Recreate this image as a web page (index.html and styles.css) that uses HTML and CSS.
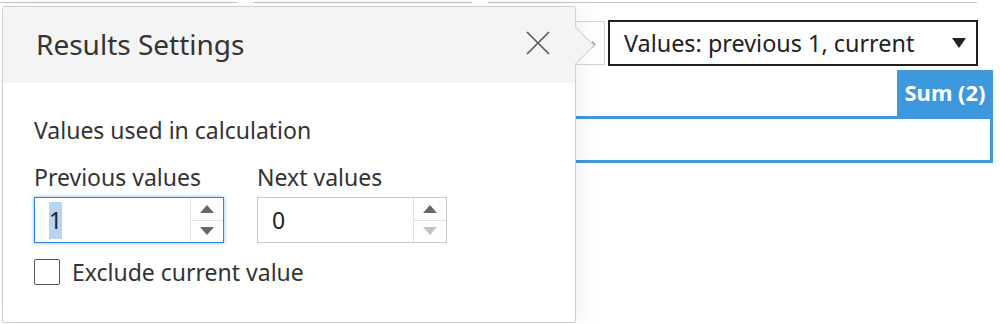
FILE: index.html
```html
<!DOCTYPE html>
<html>
<head>
    <meta charset="utf-8">
    <title>Results Settings</title>
    <link rel="stylesheet" href="styles.css">
</head>
<body>
<!-- page behind the popover -->
<div class="page">
    <div class="rules">
        <span class="rule r1"></span>
        <span class="rule r2"></span>
        <span class="rule r3"></span>
    </div>

    <div class="toolbar">
        <div class="ghost-btn">›</div>
        <div class="dropdown">
            <span>Values: previous 1, current</span>
            <span class="caret"></span>
        </div>
    </div>

    <div class="tab-row">
        <div class="sum-tab">Sum (2)</div>
    </div>
    <div class="sum-box"></div>

    <!-- tops of the next table row, cut by the window -->
    <div class="peek-row">
        <span class="peek p1"></span>
        <span class="peek p2"></span>
        <span class="peek p3"></span>
    </div>
</div>

<!-- popover -->
<div class="popover">
    <div class="pop-arrow"></div>
    <div class="pop-head">
        <span class="pop-title">Results Settings</span>
        <svg class="pop-close" width="26" height="26" viewBox="0 0 26 26">
            <path d="M2 2 L24 24 M24 2 L2 24" stroke="#555" stroke-width="1.6" fill="none"/>
        </svg>
    </div>
    <div class="pop-body">
        <div class="section-label">Values used in calculation</div>
        <div class="fields">
            <div class="field">
                <div class="field-label">Previous values</div>
                <div class="spin spin-focus">
                    <div class="spin-value"><span class="sel">1</span></div>
                    <div class="spin-btns">
                        <div class="spin-btn"><span class="tri-up"></span></div>
                        <div class="spin-btn"><span class="tri-down"></span></div>
                    </div>
                </div>
            </div>
            <div class="field">
                <div class="field-label">Next values</div>
                <div class="spin">
                    <div class="spin-value">0</div>
                    <div class="spin-btns">
                        <div class="spin-btn"><span class="tri-up"></span></div>
                        <div class="spin-btn"><span class="tri-down off"></span></div>
                    </div>
                </div>
            </div>
        </div>
        <label class="check-row">
            <span class="check"></span>
            <span>Exclude current value</span>
        </label>
    </div>
</div>
</body>
</html>
```

FILE: styles.css
```css
html, body {
    margin: 0;
    padding: 0;
}
body {
    width: 1000px;
    height: 324px;
    overflow: hidden;
    position: relative;
    background: #fff;
    font-family: "Noto Sans", "Open Sans", sans-serif;
    color: #333;
}

/* page behind */
.page {
    height: 324px;
}
.rules {
    display: flex;
    gap: 16px;
    padding-top: 2px;
}
.rule {
    display: block;
    height: 0;
    border-top: 1px solid #c4c4c4;
}
.r1 { width: 237px; }
.r2 { width: 219px; }
.r3 { width: 489px; }

.toolbar {
    display: flex;
    justify-content: flex-end;
    gap: 3px;
    padding-right: 22px;
    margin-top: 17px;
}
.ghost-btn {
    width: 160px;
    height: 44px;
    margin-top: 1px;
    border: 1px solid #d4d4d4;
    box-sizing: border-box;
    text-align: right;
    padding-right: 8px;
    line-height: 42px;
    color: #888;
    font-size: 16px;
}
.dropdown {
    width: 370px;
    height: 46px;
    box-sizing: border-box;
    border: 2px solid #1f1f1f;
    display: flex;
    align-items: center;
    justify-content: space-between;
    padding: 0 10px 0 14px;
    font-size: 23.4px;
    color: #222;
}
.caret {
    width: 0;
    height: 0;
    border-left: 7px solid transparent;
    border-right: 7px solid transparent;
    border-top: 10px solid #222;
}

.tab-row {
    display: flex;
    justify-content: flex-end;
    padding-right: 7px;
    margin-top: 4px;
}
.sum-tab {
    width: 96px;
    height: 46px;
    background: #3d98de;
    color: #fff;
    font-weight: 700;
    font-size: 22px;
    line-height: 44px;
    text-align: center;
}
.sum-box {
    margin-left: 400px;
    width: 593px;
    height: 47px;
    box-sizing: border-box;
    border: 3px solid #3d98de;
}

.peek-row {
    display: flex;
    margin-top: 158px;
    padding-left: 16px;
}
.peek {
    display: block;
    height: 2px;
    border-top: 2px dotted #aaa;
}
.p1 { width: 90px; }
.p2 { width: 50px; margin-left: 166px; }
.p3 { width: 50px; margin-left: 170px; }

/* popover */
.popover {
    position: absolute;
    left: 2px;
    top: 6px;
    width: 574px;
    height: 317px;
    box-sizing: border-box;
    background: #fff;
    border: 1px solid #cfcfcf;
    border-radius: 2px;
    box-shadow: 6px 2px 22px rgba(0, 0, 0, 0.06);
}
.pop-arrow {
    position: absolute;
    right: -14px;
    top: 25px;
    width: 26px;
    height: 26px;
    background: #f4f4f4;
    border-top: 1px solid #cfcfcf;
    border-right: 1px solid #cfcfcf;
    transform: rotate(45deg);
}
.pop-head {
    position: relative;
    height: 76px;
    background: #f4f4f4;
    display: flex;
    align-items: center;
    justify-content: space-between;
    padding: 0 24px 0 33px;
    border-radius: 2px 2px 0 0;
}
.pop-title {
    font-size: 28px;
    color: #333;
    margin-top: -3px;
}
.pop-close {
    display: block;
    margin-top: -4px;
}

.pop-body {
    padding: 33px 0 0 31px;
    font-size: 23px;
}
.section-label {
    line-height: 28px;
}
.fields {
    display: flex;
    gap: 33px;
    margin-top: 19px;
}
.field-label {
    line-height: 28px;
}
.spin {
    display: flex;
    width: 190px;
    height: 46px;
    box-sizing: border-box;
    border: 1px solid #c9c9c9;
    margin-top: 6px;
}
.spin-focus {
    border-color: #2b86da;
    box-shadow: 0 0 4px rgba(43, 134, 218, 0.55);
}
.spin-value {
    flex: 1;
    padding-left: 14px;
    line-height: 44px;
    color: #222;
}
.sel {
    background: #b6d5f3;
    padding: 2px 0 3px;
}
.spin-btns {
    width: 32px;
    border-left: 1px solid #e1e1e1;
    display: flex;
    flex-direction: column;
}
.spin-btn {
    flex: 1;
    display: flex;
    align-items: center;
    justify-content: center;
}
.spin-btn + .spin-btn {
    border-top: 1px solid #e1e1e1;
}
.tri-up, .tri-down {
    width: 0;
    height: 0;
    border-left: 7px solid transparent;
    border-right: 7px solid transparent;
}
.tri-up {
    border-bottom: 8px solid #666;
}
.tri-down {
    border-top: 8px solid #666;
}
.tri-down.off {
    border-top-color: #c2c2c2;
}

.check-row {
    display: flex;
    align-items: center;
    gap: 12px;
    margin-top: 13px;
}
.check {
    width: 26px;
    height: 26px;
    box-sizing: border-box;
    border: 1.5px solid #555;
    border-radius: 2px;
    background: #fff;
}
```
